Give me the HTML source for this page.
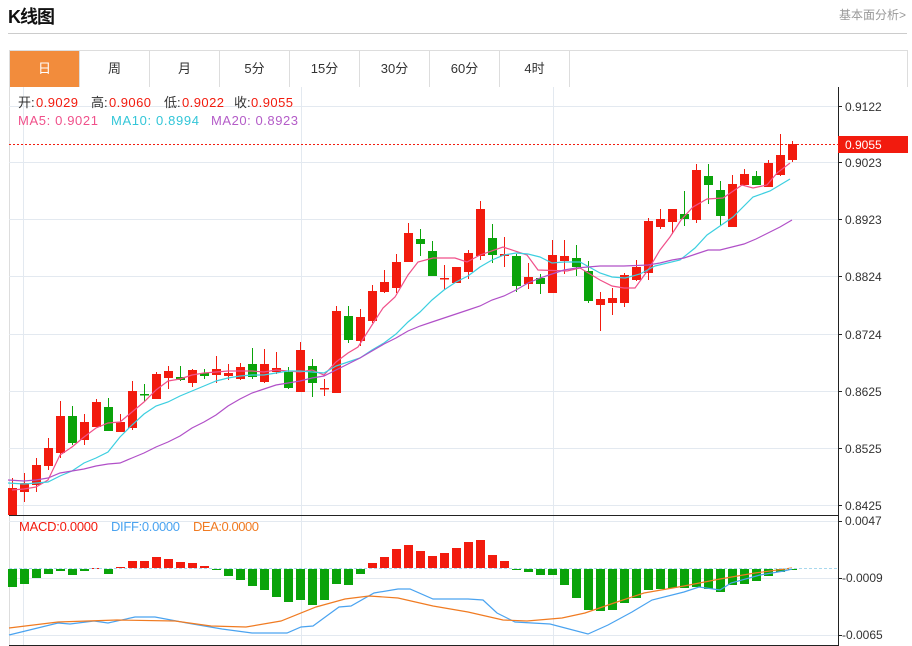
<!DOCTYPE html>
<html><head><meta charset="utf-8">
<style>
body{margin:0;width:912px;height:646px;background:#fff;overflow:hidden;font-family:"Liberation Sans","Noto Sans CJK SC",sans-serif;position:relative}
.t{position:absolute;left:8px;top:3px;font-size:18px;font-weight:bold;color:#111;letter-spacing:-1px}
.r{position:absolute;right:6px;top:6px;font-size:12px;color:#999}
.hl{position:absolute;left:8px;top:33px;width:899px;height:1px;background:#ccc}
.tabs{position:absolute;left:9px;top:50px;width:897px;height:36px;border:1px solid #ddd;border-bottom:none}
.tab{position:absolute;top:0;width:69px;height:36px;border-right:1px solid #ddd;text-align:center;line-height:36px;font-size:13px;color:#333}
svg{position:absolute;left:0;top:0}
</style></head><body>
<div class="t">K线图</div>
<div class="r">基本面分析&gt;</div>
<div class="hl"></div>
<div class="tabs">
<div class="tab" style="left:0;background:#f28c3c;color:#fff">日</div>
<div class="tab" style="left:70px">周</div>
<div class="tab" style="left:140px">月</div>
<div class="tab" style="left:210px">5分</div>
<div class="tab" style="left:280px">15分</div>
<div class="tab" style="left:350px">30分</div>
<div class="tab" style="left:420px">60分</div>
<div class="tab" style="left:490px">4时</div>
</div>
<svg id="s" width="912" height="646" font-family="Liberation Sans, Noto Sans CJK SC, sans-serif" font-size="12">
<rect x="9" y="87" width="1" height="558" fill="#ddd"/>
<g stroke="#e3e9f0" stroke-width="1">
<line x1="9" y1="106.5" x2="838" y2="106.5"/><line x1="9" y1="162.5" x2="838" y2="162.5"/><line x1="9" y1="219.5" x2="838" y2="219.5"/><line x1="9" y1="276.5" x2="838" y2="276.5"/><line x1="9" y1="334.5" x2="838" y2="334.5"/><line x1="9" y1="391.5" x2="838" y2="391.5"/><line x1="9" y1="448.5" x2="838" y2="448.5"/><line x1="9" y1="505.5" x2="838" y2="505.5"/>
<line x1="9" y1="521.5" x2="838" y2="521.5"/><line x1="9" y1="578.5" x2="838" y2="578.5"/><line x1="9" y1="635.5" x2="838" y2="635.5"/>
<line x1="23.5" y1="87" x2="23.5" y2="645"/><line x1="301.5" y1="87" x2="301.5" y2="645"/><line x1="553.5" y1="87" x2="553.5" y2="645"/>
</g>
<g id="c"></g>
<line x1="9" y1="515.5" x2="838" y2="515.5" stroke="#222"/>
<line x1="9" y1="645.5" x2="838" y2="645.5" stroke="#222"/>
<line x1="838.5" y1="87" x2="838.5" y2="646" stroke="#222"/>
<g stroke="#222"><line x1="838" y1="106.5" x2="842" y2="106.5"/><line x1="838" y1="162.5" x2="842" y2="162.5"/><line x1="838" y1="219.5" x2="842" y2="219.5"/><line x1="838" y1="276.5" x2="842" y2="276.5"/><line x1="838" y1="334.5" x2="842" y2="334.5"/><line x1="838" y1="391.5" x2="842" y2="391.5"/><line x1="838" y1="448.5" x2="842" y2="448.5"/><line x1="838" y1="505.5" x2="842" y2="505.5"/><line x1="838" y1="521.5" x2="842" y2="521.5"/><line x1="838" y1="578.5" x2="842" y2="578.5"/><line x1="838" y1="635.5" x2="842" y2="635.5"/></g>
<g fill="#333">
<text x="845" y="111">0.9122</text><text x="845" y="167">0.9023</text><text x="845" y="224">0.8923</text><text x="845" y="281">0.8824</text><text x="845" y="339">0.8724</text><text x="845" y="396">0.8625</text><text x="845" y="453">0.8525</text><text x="845" y="510">0.8425</text>
<text x="845" y="525">0.0047</text><text x="842" y="582">-0.0009</text><text x="842" y="639">-0.0065</text>
</g>
<line x1="9" y1="144.5" x2="838" y2="144.5" stroke="#f21b0e" stroke-dasharray="2,2"/>
<rect x="838" y="136" width="70" height="17" fill="#f21b0e"/>
<text x="845" y="149" fill="#fff">0.9055</text>
<line x1="9" y1="568.5" x2="838" y2="568.5" stroke="#a8d8ee" stroke-dasharray="3,2"/>
<g font-size="13">
<text x="18" y="107" fill="#333">开:</text><text x="36" y="107" fill="#f21b0e" textLength="42">0.9029</text>
<text x="91" y="107" fill="#333">高:</text><text x="109" y="107" fill="#f21b0e" textLength="42">0.9060</text>
<text x="164" y="107" fill="#333">低:</text><text x="182" y="107" fill="#f21b0e" textLength="42">0.9022</text>
<text x="234" y="107" fill="#333">收:</text><text x="251" y="107" fill="#f21b0e" textLength="42">0.9055</text>
<text x="18" y="125" fill="#f0508a" textLength="80">MA5: 0.9021</text>
<text x="111" y="125" fill="#33c6d8" textLength="88">MA10: 0.8994</text>
<text x="211" y="125" fill="#b45cc8" textLength="87">MA20: 0.8923</text>
<text x="19" y="531" fill="#f21b0e" textLength="79">MACD:0.0000</text>
<text x="111" y="531" fill="#4aa3f0" textLength="69">DIFF:0.0000</text>
<text x="193" y="531" fill="#f07b22" textLength="66">DEA:0.0000</text>
</g>
</svg>
<script>
var K=[[515,488,478,515],[492,483,473,502],[485,465,458,492],[466,448,438,470],[453,416,401,458],[416,443,406,445],[440,422,414,445],[427,402,399,427],[407,431,398,431],[432,422,414,432],[428,391,381,430],[394,395,384,402],[399,374,372,399],[378,371,366,389],[377,380,366,381],[383,370,369,387],[373,376,369,379],[375,369,356,383],[376,373,364,380],[379,367,363,380],[364,377,348,379],[382,364,349,383],[372,368,352,374],[372,388,367,389],[392,350,342,392],[366,383,359,397],[389,388,379,396],[393,311,306,393],[316,340,306,343],[341,317,309,346],[321,291,285,323],[292,282,270,293],[288,262,254,293],[262,233,223,262],[239,244,229,256],[251,276,241,276],[279,278,265,290],[283,267,267,283],[272,253,250,279],[256,209,201,260],[238,255,224,263],[256,254,237,267],[256,286,254,292],[284,277,263,289],[278,284,274,294],[293,255,240,293],[261,256,240,274],[258,267,245,276],[271,301,261,303],[305,299,292,331],[303,298,288,315],[303,275,273,307],[280,267,260,281],[273,221,218,280],[227,219,209,229],[222,209,209,234],[214,219,191,226],[220,170,164,223],[176,185,164,204],[190,216,181,226],[227,184,175,227],[185,174,169,186],[176,185,171,185],[187,163,160,187],[175,155,134,176],[160,144,141,162]];
var M=[-18,-15,-9,-5,-2,-6,-2,0,-5,1,7,7,11,9,6,5,2,-1,-7,-11,-17,-21,-28,-33,-31,-36,-31,-15,-16,-5,5,11,19,23,17,12,15,20,26,28,13,7,-1,-3,-6,-6,-16,-29,-41,-42,-41,-34,-29,-21,-20,-19,-19,-18,-20,-23,-16,-15,-12,-7,-3,-1];
var R="#f21b0e",G="#0aa30a",h="";
K.forEach(function(k,i){var x=12+12*i,up=k[1]<=k[0],c=up?R:G,t=Math.min(k[0],k[1]),b=Math.max(k[0],k[1]);
h+='<line x1="'+(x+.5)+'" y1="'+k[2]+'" x2="'+(x+.5)+'" y2="'+k[3]+'" stroke="'+c+'"/>';
h+='<rect x="'+(x-4)+'" y="'+t+'" width="9" height="'+Math.max(b-t,1.5)+'" fill="'+c+'"/>';});
M.forEach(function(v,i){var x=12+12*i,c=v>=0?R:G;h+='<rect x="'+(x-4)+'" y="'+(v>=0?568-v:569)+'" width="9" height="'+Math.max(Math.abs(v),1)+'" fill="'+c+'"/>';});
function pl(p,c){return '<polyline fill="none" stroke="'+c+'" stroke-width="1.2" points="'+p+'"/>';}
h+=pl("12,490 24,489 36,487 48,480 60,455 72,447 84,437 96,428 108,423 120,422 132,412 144,402 156,390 168,381 180,379 192,375 204,373 216,372 228,371 240,371 252,371 264,372 276,370 288,371 300,372 312,370 324,375 336,362 348,353 358,347 372,325 383,308 395,297 408,275 418,262 433,258 455,258 467,262 480,255 503,247 527,255 538,270 567,271 580,268 600,280 612,286 624,288 635,288 648,270 660,250 670,237 681,220 693,207 707,199 723,198 742,185 753,188 767,185 777,173 790,163","#f0508a");
h+=pl("8,483 24,484 36,483 48,482 60,476 72,471 84,463 96,458 108,452 120,437 132,425 144,414 156,406 168,402 180,396 192,391 204,386 216,381 228,378 240,376 252,375 264,375 276,373 288,371 300,371 312,372 324,373 336,366 348,362 360,358 372,350 384,343 396,334 408,322 420,312 432,300 444,290 456,282 468,276 480,267 492,260 504,255 516,253 528,254 540,257 552,263 564,262 580,262 600,273 612,277 625,278 640,274 655,266 680,260 695,248 707,235 720,226 733,217 753,197 770,191 790,179","#3ccfe0");
h+=pl("8,480 24,481 36,480 48,478 60,473 72,471 84,469 96,466 108,464 120,463 132,458 144,453 156,447 168,442 180,436 192,428 204,422 216,415 228,406 240,399 252,393 264,389 276,385 288,383 300,381 312,378 324,376 336,370 348,364 360,358 372,351 384,344 396,338 408,331 420,326 432,322 444,318 456,314 468,310 480,306 492,300 504,296 516,290 528,283 540,278 552,274 564,270 576,268 588,267 600,266 624,266 648,265 660,263 672,260 684,258 696,254 708,250 720,250 732,247 744,244 756,239 768,233 780,227 792,220","#b150c8");
h+=pl("9,635 58,623 70,624 94,621 108,623 135,617 155,617 187,623 222,629 252,633 287,633 301,627 313,626 328,615 339,607 351,606 374,593 398,589 410,589 433,599 468,599 483,600 497,613 515,622 550,624 588,634 608,625 632,612 652,600 684,592 699,587 720,590 731,583 760,575 784,571 792,569","#4aa3f0");
h+=pl("9,628 58,622 117,620 175,621 211,626 246,627 281,621 316,607 345,599 369,596 398,598 433,606 468,612 503,620 527,621 562,618 585,613 614,603 644,593 684,586 720,579 755,573 792,568","#f07b22");
document.getElementById("c").innerHTML=h;
</script>
</body></html>
